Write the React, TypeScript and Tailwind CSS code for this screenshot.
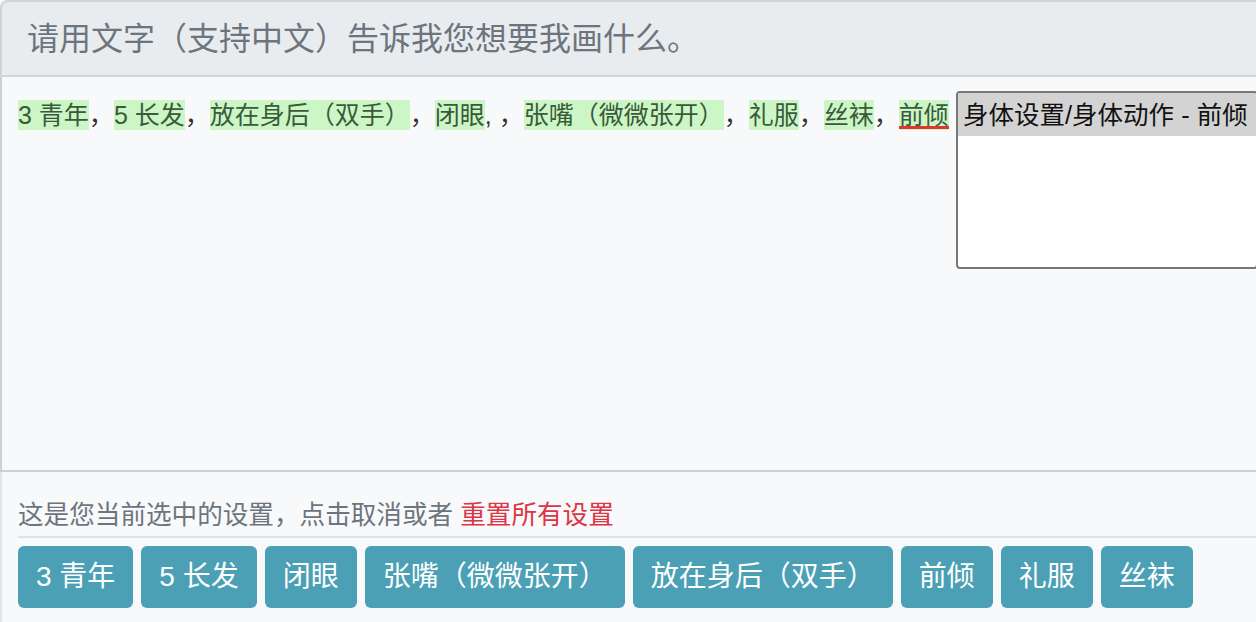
import React from "react";

const items: { text: string; sep: string; underline?: boolean }[] = [
  { text: "3 青年", sep: "，" },
  { text: "5 长发", sep: "，" },
  { text: "放在身后（双手）", sep: "，" },
  { text: "闭眼", sep: ", ，" },
  { text: "张嘴（微微张开）", sep: "，" },
  { text: "礼服", sep: "，" },
  { text: "丝袜", sep: "，" },
  { text: "前倾", sep: "", underline: true },
];

const buttons = ["3 青年", "5 长发", "闭眼", "张嘴（微微张开）", "放在身后（双手）", "前倾", "礼服", "丝袜"];

export default function App() {
  return (
    <div className="w-[1256px] h-[622px] overflow-hidden bg-[#f8f9fa] font-['Liberation_Sans','Noto_Sans_CJK_SC',sans-serif]">
      <div className="h-[77px] bg-[#e9ecef] border-t-2 border-l-2 border-b-2 border-[#ced4da] rounded-tl-[8px] flex items-center pl-[25px] text-[32px] leading-[40px] text-[#6c757d]">
        请用文字（支持中文）告诉我您想要我画什么。
      </div>
      <div className="relative h-[395px] border-l-2 border-b-2 border-[#cfd0d3] bg-[#f8f9fa] pt-[23px] pl-[16px]">
        <div className="flex whitespace-pre text-[25px] leading-[30px]">
          {items.map((it, i) => (
            <React.Fragment key={i}>
              <span className="relative inline-block h-[30px] bg-[#ccf6c6] text-[#3a5a3a]">
                {it.text}
                {it.underline && (
                  <span className="absolute left-0 right-0 bottom-[1px] h-[3px] bg-[#e3342b]" />
                )}
              </span>
              {it.sep && <span className="inline-block h-[30px] text-[#333]">{it.sep}</span>}
            </React.Fragment>
          ))}
        </div>
        <div className="absolute left-[954px] top-[14px] w-[302px] h-[178px] border-2 border-[#777] rounded-[4px] bg-white overflow-hidden">
          <div className="h-[43px] bg-[#d3d3d3] flex items-center pl-[5px] text-[25.5px] leading-[30px] text-[#111] whitespace-nowrap">
            身体设置/身体动作 - 前倾
          </div>
        </div>
      </div>
      <div className="border-l-2 border-[#e3e4e8] h-[150px]">
        <div className="ml-[16px] pt-[28px] pb-[6px] border-b-2 border-[#dee2e6] text-[25.6px] leading-[30px] text-[#6c757d] whitespace-nowrap">
          这是您当前选中的设置，点击取消或者 <span className="text-[#dc3545]">重置所有设置</span>
        </div>
        <div className="ml-[16px] mt-[8px] flex gap-2">
          {buttons.map((b) => (
            <div
              key={b}
              className="h-[62px] px-[18px] rounded-[6px] bg-[#4ba0b6] text-white text-[28px] leading-[62px] whitespace-pre"
            >
              {b}
            </div>
          ))}
        </div>
      </div>
    </div>
  );
}
